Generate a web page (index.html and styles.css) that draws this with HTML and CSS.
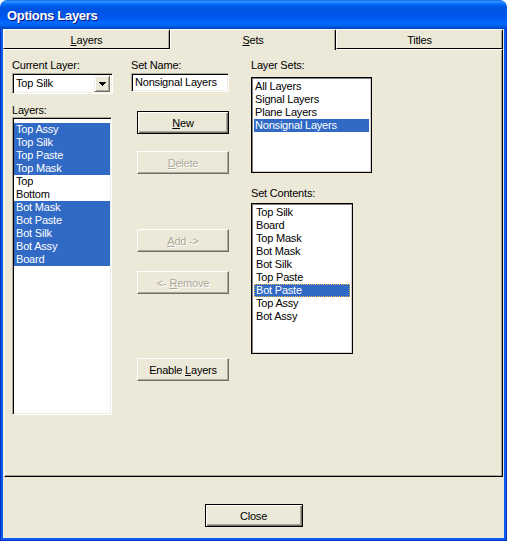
FILE: index.html
```html
<!DOCTYPE html>
<html lang="en">
<head>
    <meta charset="UTF-8">
    <title>Options Layers</title>
    <link rel="stylesheet" href="styles.css">
</head>
<body>
    <div class="window">
        <div class="titlebar">Options Layers</div>
        <div class="frame">
            <div class="tabs">
                <div class="tab tab-left"><u>L</u>ayers</div>
                <div class="tab active"><u>S</u>ets</div>
                <div class="tab tab-right">Titles</div>
            </div>
            <div class="panel">
                <div class="col col-layers">
                    <div class="label">Current Layer:</div>
                    <div class="combo">
                        <span class="combo-text">Top Silk</span>
                        <span class="drop">
                            <svg width="7" height="4" viewBox="0 0 7 4" shape-rendering="crispEdges">
                                <rect x="0" y="0" width="7" height="1" fill="#000"/>
                                <rect x="1" y="1" width="5" height="1" fill="#000"/>
                                <rect x="2" y="2" width="3" height="1" fill="#000"/>
                                <rect x="3" y="3" width="1" height="1" fill="#000"/>
                            </svg>
                        </span>
                    </div>
                    <div class="label label-layers">Layers:</div>
                    <ul class="list sunken list-layers">
                        <li class="sel">Top Assy</li>
                        <li class="sel">Top Silk</li>
                        <li class="sel">Top Paste</li>
                        <li class="sel">Top Mask</li>
                        <li>Top</li>
                        <li>Bottom</li>
                        <li class="sel">Bot Mask</li>
                        <li class="sel">Bot Paste</li>
                        <li class="sel">Bot Silk</li>
                        <li class="sel">Bot Assy</li>
                        <li class="sel">Board</li>
                    </ul>
                </div>

                <div class="col col-buttons">
                    <div class="label">Set Name:</div>
                    <div class="textbox">Nonsignal Layers</div>
                    <button class="btn default btn-new"><u>N</u>ew</button>
                    <button class="btn btn-delete" disabled><u>D</u>elete</button>
                    <button class="btn btn-add" disabled><u>A</u>dd -&gt;</button>
                    <button class="btn btn-remove" disabled>&lt;- <u>R</u>emove</button>
                    <button class="btn btn-enable">Enable <u>L</u>ayers</button>
                </div>

                <div class="col col-sets">
                    <div class="label">Layer Sets:</div>
                    <ul class="list framed list-sets">
                        <li>All Layers</li>
                        <li>Signal Layers</li>
                        <li>Plane Layers</li>
                        <li class="sel">Nonsignal Layers</li>
                    </ul>
                    <div class="label label-contents">Set Contents:</div>
                    <ul class="list framed list-contents">
                        <li>Top Silk</li>
                        <li>Board</li>
                        <li>Top Mask</li>
                        <li>Bot Mask</li>
                        <li>Bot Silk</li>
                        <li>Top Paste</li>
                        <li class="sel focus">Bot Paste</li>
                        <li>Top Assy</li>
                        <li>Bot Assy</li>
                    </ul>
                </div>
            </div>
            <div class="footer">
                <button class="btn default btn-close">Close</button>
            </div>
        </div>
    </div>
</body>
</html>
```

FILE: styles.css
```css
body {
    margin: 0;
    background-color: #fff;
    font-family: "Liberation Sans", Arial, sans-serif;
    font-size: 11px;
    letter-spacing: -0.2px;
    color: #000;
}

ul {
    margin: 0;
    padding: 0;
    list-style: none;
}

.window {
    width: 507px;
    height: 541px;
    display: flex;
    flex-direction: column;
}

/* XP style caption */
.titlebar {
    height: 29px;
    box-sizing: border-box;
    padding: 8px 0 0 7px;
    border-radius: 7px 7px 0 0;
    background: linear-gradient(to bottom,
        #0058ee 0%, #3593ff 4%, #288eff 7%, #127dff 10%,
        #036ffc 14%, #0262ee 18%, #0057e5 24%, #0054e3 30%,
        #0055eb 56%, #005bf5 66%, #026afe 78%, #0062ef 88%,
        #0052d6 94%, #0046c0 100%);
    color: #fff;
    font-size: 13px;
    font-weight: bold;
    letter-spacing: -0.3px;
    line-height: 15px;
    text-shadow: 1px 1px #0a1883;
}

.frame {
    flex: 1;
    display: flex;
    flex-direction: column;
    background-color: #ece9d8;
    border: solid #0b5cf0;
    border-width: 0 3px 3px 3px;
    position: relative;
}

/* darker outer edge of the window frame */
.frame::before {
    content: '';
    position: absolute;
    left: -3px;
    right: -3px;
    top: 0;
    bottom: -3px;
    border: solid #0a2fb8;
    border-width: 0 1px 1px 1px;
    pointer-events: none;
}

/* tab strip */
.tabs {
    display: flex;
    align-items: flex-end;
    height: 20px;
}

.tab {
    box-sizing: border-box;
    height: 20px;
    width: 167px;
    padding-top: 3px;
    border-top: 1px solid #fff;
    border-left: 1px solid #fff;
    border-right: 1px solid #000;
    border-bottom: 1px solid #000;
    border-radius: 2px 2px 0 0;
    box-shadow: inset -1px 0 #aca899;
    text-align: center;
    line-height: 14px;
}

.tab.active {
    width: 166px;
    height: 21px;
    margin-bottom: -1px;
    border-bottom: none;
    background-color: #ece9d8;
    position: relative;
    z-index: 1;
}

.panel {
    height: 428px;
    box-sizing: border-box;
    margin: 0 1px;
    padding: 8px 0 0 7px;
    display: flex;
    align-items: flex-start;
    border: 1px solid;
    border-color: #fff #000 #000 #fff;
    box-shadow: inset -1px -1px #aca899;
}

.col {
    display: flex;
    flex-direction: column;
    align-items: flex-start;
}

.col-layers {
    width: 101px;
}

.col-buttons {
    width: 98px;
    margin-left: 18px;
}

.col-sets {
    width: 121px;
    margin-left: 22px;
}

.label {
    line-height: 13px;
    padding-top: 1px;
}

.label-layers {
    margin-top: 9px;
}

.label-contents {
    margin-top: 13px;
}

/* sunken edit fields */
.sunken,
.combo,
.textbox {
    box-sizing: border-box;
    border: 1px solid;
    border-color: #aca899 #fff #fff #aca899;
    box-shadow: inset 1px 1px #000, inset -1px -1px #f1efe2;
    background-color: #fff;
}

.combo {
    width: 101px;
    height: 21px;
    margin-top: 1px;
    padding: 1px 2px 1px 1px;
    display: flex;
    align-items: center;
}

.combo-text {
    flex: 1;
    padding-left: 2px;
    line-height: 17px;
}

.drop {
    width: 16px;
    height: 17px;
    box-sizing: border-box;
    display: flex;
    align-items: center;
    justify-content: center;
    background-color: #ece9d8;
    border: 1px solid;
    border-color: #f1efe2 #716f64 #716f64 #f1efe2;
    box-shadow: inset 1px 1px #fff, inset -1px -1px #aca899;
}

.textbox {
    width: 98px;
    height: 19px;
    margin-top: 1px;
    padding-left: 3px;
    line-height: 17px;
}

/* list boxes */
.list {
    background-color: #fff;
    box-sizing: border-box;
}

.list li {
    line-height: 13px;
    height: 13px;
    white-space: nowrap;
}

.list li.sel {
    background-color: #316ac5;
    color: #fff;
}

.list li.focus {
    outline: 1px dotted #e8b850;
    outline-offset: -1px;
}

.framed {
    border: 1px solid #000;
    box-shadow: inset 1px 1px #808080, inset -1px -1px #d4d0c8;
}

.list-layers {
    width: 100px;
    height: 298px;
    padding: 5px 1px 0 1px;
}

.list-layers li {
    padding-left: 2px;
}

.list-sets {
    width: 121px;
    height: 96px;
    margin-top: 5px;
    padding: 2px 2px 0 2px;
}

.list-sets li {
    padding-left: 1px;
}

.list-contents {
    width: 102px;
    height: 151px;
    margin-top: 3px;
    padding: 2px 2px 0 2px;
}

.list-contents li {
    padding-left: 2px;
}

/* push buttons */
.btn {
    display: block;
    width: 92px;
    height: 23px;
    margin-left: 6px;
    padding: 0;
    box-sizing: border-box;
    background-color: #ece9d8;
    border: 1px solid;
    border-color: #fff #716f64 #716f64 #fff;
    box-shadow: inset -1px -1px #aca899;
    font-family: inherit;
    font-size: 11px;
    letter-spacing: -0.2px;
    color: #000;
}

.btn.default {
    border-color: #000;
    box-shadow: inset 1px 1px #fff, inset -1px -1px #716f64, inset -2px -2px #aca899;
}

.btn:disabled {
    color: #aca899;
    text-shadow: 1px 1px #fff;
}

.btn-new { margin-top: 19px; }
.btn-delete { margin-top: 17px; }
.btn-add { margin-top: 55px; }
.btn-remove { margin-top: 19px; }
.btn-enable { margin-top: 64px; }

.footer {
    flex: 1;
    display: flex;
    justify-content: center;
    padding-top: 27px;
}

.btn-close {
    width: 98px;
    margin-left: 0;
}
```
